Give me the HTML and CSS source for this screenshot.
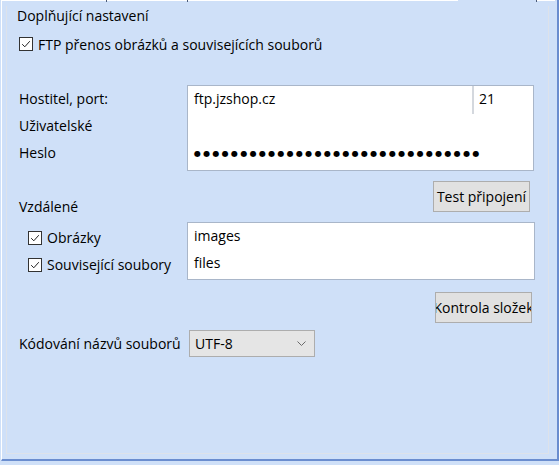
FILE: index.html
```html
<!DOCTYPE html>
<html lang="cs">
<head>
<meta charset="utf-8">
<title>Doplňující nastavení</title>
<link rel="stylesheet" href="styles.css">
</head>
<body>
<div class="window">
  <div class="tabedge">
    <span class="seg seg1"></span><span class="tick"></span><span class="seg seg2"></span><span class="tick"></span><span class="seg seg3"></span><span class="gap"></span><span class="tick"></span><span class="seg seg4"></span>
  </div>
  <div class="group">
    <div class="legend">Doplňující nastavení</div>

    <div class="check ftp">
      <span class="box"><svg viewBox="0 0 12 12" width="12" height="12"><path d="M2.2 6.2 L4.8 8.8 L9.8 3.2" fill="none" stroke="#222" stroke-width="1"/></svg></span>
      <span>FTP přenos obrázků a souvisejících souborů</span>
    </div>

    <div class="server">
      <div class="labels">
        <div class="row">Hostitel, port:</div>
        <div class="row">Uživatelské</div>
        <div class="row">Heslo</div>
      </div>
      <div class="field">
        <div class="row host"><span class="hostname">ftp.jzshop.cz</span><span class="port">21</span></div>
        <div class="row"></div>
        <div class="row pw">●●●●●●●●●●●●●●●●●●●●●●●●●●●●●●●</div>
      </div>
    </div>

    <div class="remote-head">
      <div class="section-label">Vzdálené</div>
      <div class="btn test">Test připojení</div>
    </div>

    <div class="folders">
      <div class="checks">
        <div class="check row">
          <span class="box"><svg viewBox="0 0 12 12" width="12" height="12"><path d="M2.2 6.2 L4.8 8.8 L9.8 3.2" fill="none" stroke="#222" stroke-width="1"/></svg></span>
          <span>Obrázky</span>
        </div>
        <div class="check row">
          <span class="box"><svg viewBox="0 0 12 12" width="12" height="12"><path d="M2.2 6.2 L4.8 8.8 L9.8 3.2" fill="none" stroke="#222" stroke-width="1"/></svg></span>
          <span>Související soubory</span>
        </div>
      </div>
      <div class="field folderfield">
        <div class="row">images</div>
        <div class="row">files</div>
      </div>
    </div>

    <div class="btnrow">
      <div class="btn check-folders"><span>Kontrola složek</span></div>
    </div>

    <div class="encoding">
      <div class="enc-label">Kódování názvů souborů</div>
      <div class="select">
        <span>UTF-8</span>
        <svg class="chev" viewBox="0 0 9 5" width="9" height="5"><path d="M0.5 0.5 L4.5 4.5 L8.5 0.5" fill="none" stroke="#6a6a6a" stroke-width="1"/></svg>
      </div>
    </div>
  </div>
</div>
</body>
</html>
```

FILE: styles.css
```css
* { box-sizing: border-box; }
html, body {
  margin: 0;
  padding: 0;
  background: #cfe0f8;
}
body {
  font-family: "Open Sans", "Noto Sans", sans-serif;
  font-size: 14px;
  color: #000;
}
.window {
  width: 558px;
  height: 461px;
  margin-left: 1px;
  border-left: 1px solid #ffffff;
  border-right: 2px solid #6a8dcf;
  border-bottom: 2px solid #6a8dcf;
  background: #cfe0f8;
}
.tabedge {
  display: flex;
  height: 2px;
}
.tabedge .seg { height: 1px; background: #ffffff; }
.tabedge .seg1 { width: 104px; }
.tabedge .seg2 { width: 80px; }
.tabedge .seg3 { width: 270px; }
.tabedge .gap { width: 78px; }
.tabedge .seg4 { width: 18px; }
.tabedge .tick { width: 1px; height: 2px; background: #4a5a78; }

.group {
  margin-left: 4px;
  width: 543px;
  height: 448px;
  border: 1px solid #dde2ea;
  border-top: none;
  padding: 0 12px 0 12px;
}
.legend {
  margin-left: -2px;
  margin-top: 4px;
  height: 20px;
  line-height: 20px;
}
.check {
  display: flex;
  align-items: center;
}
.box {
  width: 14px;
  height: 14px;
  border: 1px solid #333;
  background: #fff;
  display: flex;
  align-items: center;
  justify-content: center;
  margin-right: 5px;
  flex: none;
}
.box svg { display: block; }
.ftp {
  margin-top: 8px;
  height: 20px;
}
.server {
  display: flex;
  margin-top: 31px;
}
.labels {
  width: 168px;
  padding-top: 1px;
}
.row { height: 27px; line-height: 26px; }
.field {
  width: 348px;
  background: #fff;
  border: 1px solid #a9b6c9;
  padding-left: 6px;
}
.server .field { height: 86px; width: 347px; }
.host {
  display: flex;
  height: 28px;
}
.hostname { width: 280px; border-right: 2px solid #d4d8de; }
.port { padding-left: 5px; }
.pw {
  font-family: "DejaVu Sans", sans-serif;
  font-size: 8px;
  letter-spacing: 2.3px;
}
.remote-head {
  display: flex;
  justify-content: space-between;
  align-items: flex-start;
  margin-top: 10px;
  height: 36px;
}
.section-label {
  margin-top: 16px;
  line-height: 20px;
}
.btn {
  height: 31px;
  background: #e1e1e1;
  border: 1px solid #adadad;
  display: flex;
  align-items: center;
  justify-content: center;
  white-space: nowrap;
  overflow: hidden;
}
.test {
  width: 97px;
  margin-right: 6px;
}
.folders {
  display: flex;
  margin-top: 5px;
}
.checks {
  width: 168px;
  padding-left: 9px;
  padding-top: 2px;
}
.checks .box { margin-right: 5px; }
.folderfield {
  height: 58px;
}
.btnrow {
  display: flex;
  justify-content: flex-end;
  margin-top: 12px;
}
.check-folders {
  width: 97px;
  margin-right: 4px;
}
.encoding {
  display: flex;
  align-items: center;
  margin-top: 7px;
}
.enc-label { width: 170px; }
.select {
  width: 126px;
  height: 27px;
  background: #e5e5e5;
  border: 1px solid #adadad;
  display: flex;
  align-items: center;
  justify-content: space-between;
  padding: 0 8px 0 5px;
}
.chev { display: block; }
```
